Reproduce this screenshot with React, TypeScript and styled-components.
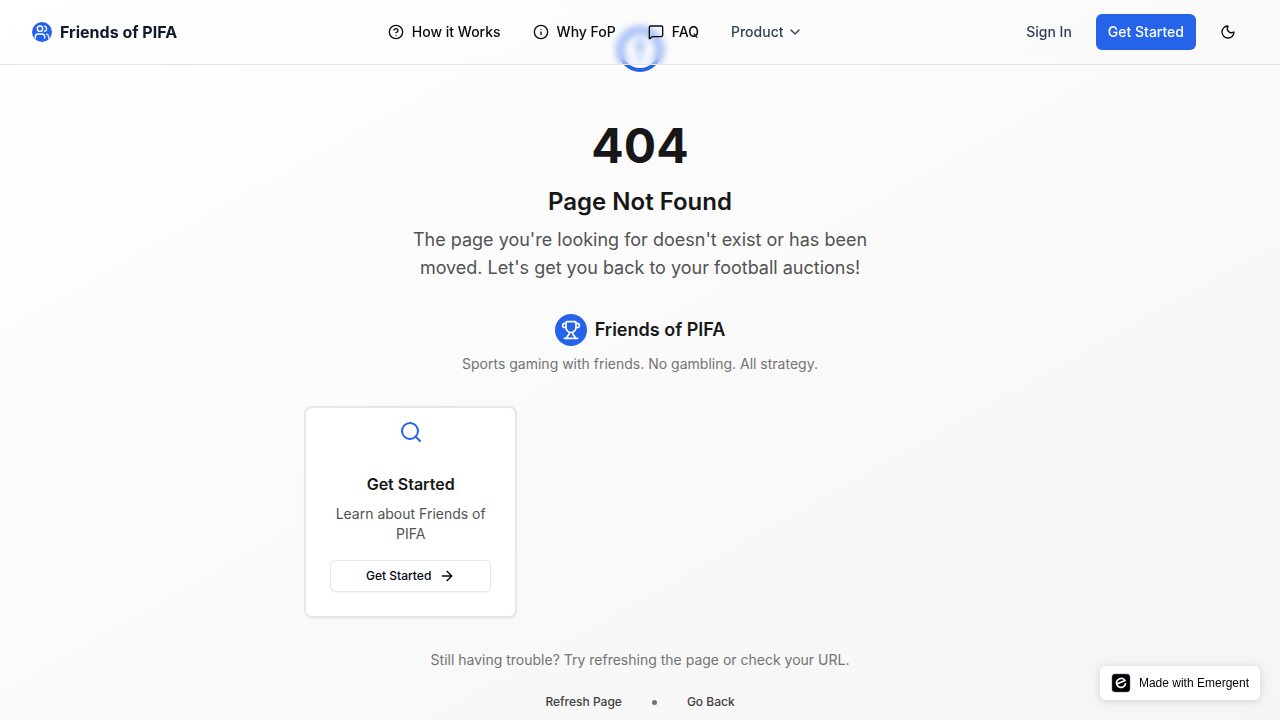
import React from "react";
import styled, { createGlobalStyle } from "styled-components";
import {
  ArrowRight,
  ChevronDown,
  CircleAlert,
  CircleQuestionMark,
  Info,
  MessageSquare,
  Moon,
  Search,
  Trophy,
  Users,
} from "lucide-react";

const GlobalStyle = createGlobalStyle`
  *, *::before, *::after { box-sizing: border-box; }
  body {
    margin: 0;
    font-family: Inter, "Liberation Sans", sans-serif;
    color: #171717;
  }
  h1, h2, h3, p { margin: 0; }
  button { font-family: inherit; cursor: pointer; }
  a { color: inherit; text-decoration: none; }
`;

const Page = styled.div`
  min-height: 100vh;
  background: linear-gradient(to bottom right, #ffffff 0%, #f5f5f5 100%);
`;

const Header = styled.header`
  position: fixed;
  inset: 0 0 auto 0;
  z-index: 10;
  height: 65px;
  padding: 0 32px;
  display: flex;
  align-items: center;
  justify-content: space-between;
  border-bottom: 1px solid #e5e5e5;
  background: rgba(255, 255, 255, 0.1);
  backdrop-filter: blur(4px);
`;

const Brand = styled.a`
  display: flex;
  align-items: center;
  gap: 8px;
  font-size: 16px;
  line-height: 24px;
  font-weight: 700;
  color: #0f172a;
`;

const Disc = styled.span<{ $size: number }>`
  width: ${(p) => p.$size}px;
  height: ${(p) => p.$size}px;
  border-radius: 50%;
  background: #2563eb;
  color: #ffffff;
  display: flex;
  align-items: center;
  justify-content: center;
`;

const Nav = styled.nav`
  display: flex;
  align-items: center;
  gap: 32px;
`;

const NavLink = styled.a`
  display: flex;
  align-items: center;
  gap: 8px;
  font-size: 14px;
  line-height: 20px;
  font-weight: 500;
  color: #0a0a0a;
`;

const NavMenuButton = styled.button`
  display: flex;
  align-items: center;
  gap: 4px;
  padding: 0;
  border: 0;
  background: none;
  font-size: 14px;
  line-height: 20px;
  font-weight: 500;
  color: #334155;
`;

const Actions = styled.div`
  display: flex;
  align-items: center;
  gap: 12px;
`;

const SignIn = styled.a`
  padding: 8px 12px;
  font-size: 14px;
  line-height: 20px;
  font-weight: 500;
  color: #334155;
`;

const PrimaryButton = styled.button`
  height: 36px;
  padding: 0 12px;
  border: 0;
  border-radius: 6px;
  background: #2563eb;
  color: #ffffff;
  font-size: 14px;
  line-height: 20px;
  font-weight: 500;
`;

const IconButton = styled.button`
  width: 40px;
  height: 36px;
  padding: 0;
  border: 0;
  background: none;
  color: #0a0a0a;
  display: flex;
  align-items: center;
  justify-content: center;
`;

const Main = styled.main`
  max-width: 704px;
  margin: 0 auto;
  padding: 26px 16px 0;
  display: flex;
  flex-direction: column;
  align-items: center;
  text-align: center;
`;

const AlertIcon = styled(CircleAlert)`
  width: 48px;
  height: 48px;
  color: #2563eb;
`;

const Title = styled.h1`
  margin-top: 48px;
  font-size: 48px;
  line-height: 48px;
  font-weight: 700;
`;

const Subtitle = styled.h2`
  margin-top: 16px;
  font-size: 24px;
  line-height: 32px;
  font-weight: 600;
`;

const Lead = styled.p`
  max-width: 480px;
  margin-top: 8px;
  font-size: 18px;
  line-height: 28px;
  color: #525252;
`;

const BrandRow = styled.div`
  display: flex;
  align-items: center;
  gap: 8px;
  margin-top: 32px;
  font-size: 18px;
  line-height: 28px;
  font-weight: 600;
`;

const Note = styled.p<{ $gap: number }>`
  margin-top: ${(p) => p.$gap}px;
  font-size: 14px;
  line-height: 20px;
  color: #737373;
`;

const CardGrid = styled.section`
  width: 100%;
  margin-top: 32px;
  display: grid;
  grid-template-columns: repeat(3, 1fr);
  gap: 16px;
`;

const Card = styled.article`
  padding: 12px 24px 24px;
  display: flex;
  flex-direction: column;
  align-items: center;
  border: 2px solid #e5e7eb;
  border-radius: 8px;
  background: #ffffff;
  box-shadow: 0 1px 2px rgba(0, 0, 0, 0.06);
`;

const CardIcon = styled.span`
  display: flex;
  color: #2563eb;
`;

const CardTitle = styled.h3`
  margin-top: 28px;
  font-size: 16px;
  line-height: 24px;
  font-weight: 600;
`;

const CardText = styled.p`
  margin-top: 8px;
  font-size: 14px;
  line-height: 20px;
  color: #525252;
`;

const OutlineButton = styled.button`
  width: 100%;
  height: 32px;
  margin-top: 16px;
  display: flex;
  align-items: center;
  justify-content: center;
  gap: 8px;
  border: 1px solid #e5e7eb;
  border-radius: 6px;
  background: #ffffff;
  box-shadow: 0 1px 2px rgba(0, 0, 0, 0.05);
  font-size: 12px;
  line-height: 16px;
  font-weight: 500;
  color: #020617;
`;

const FooterActions = styled.div`
  margin-top: 16px;
  display: flex;
  align-items: center;
  gap: 18px;
`;

const TextButton = styled.button`
  height: 32px;
  padding: 0 12px;
  border: 0;
  background: none;
  font-size: 12px;
  line-height: 16px;
  font-weight: 500;
  color: #404040;
`;

const Dot = styled.span`
  width: 5px;
  height: 5px;
  border-radius: 50%;
  background: #737373;
`;

const Badge = styled.a`
  position: fixed;
  right: 20px;
  bottom: 20px;
  z-index: 20;
  height: 34px;
  padding: 0 11px;
  display: flex;
  align-items: center;
  gap: 8px;
  border-radius: 6px;
  background: #ffffff;
  box-shadow: 0 1px 8px rgba(0, 0, 0, 0.16);
  font-family: "Liberation Sans", sans-serif;
  font-size: 12px;
  line-height: 16px;
  color: #000000;
`;

function EmergentLogo() {
  return (
    <svg width="20" height="20" viewBox="0 0 20 20" fill="none" aria-hidden="true">
      <rect x="1" y="1" width="18" height="18" rx="3" fill="#000" stroke="#5b6a9a" strokeWidth="0.5" />
      <path
        d="M5.800 11 14 7.600C12.900 5.400 10.300 4.800 8.100 6C5.800 7.300 5 9.900 6.200 12.200C7.500 14.600 10.300 15 12.400 13.700C13.800 12.800 14.500 11.600 14.700 10.200"
        stroke="#fff"
        strokeWidth="1.7"
      />
    </svg>
  );
}

export default function App() {
  return (
    <Page>
      <GlobalStyle />
      <Header>
        <Brand href="#">
          <Disc $size={20}>
            <Users size={16} />
          </Disc>
          Friends of PIFA
        </Brand>
        <Nav>
          <NavLink href="#how"><CircleQuestionMark size={16} />How it Works</NavLink>
          <NavLink href="#why"><Info size={16} />Why FoP</NavLink>
          <NavLink href="#faq"><MessageSquare size={16} />FAQ</NavLink>
          <NavMenuButton>Product<ChevronDown size={16} /></NavMenuButton>
        </Nav>
        <Actions>
          <SignIn href="#sign-in">Sign In</SignIn>
          <PrimaryButton>Get Started</PrimaryButton>
          <IconButton aria-label="Toggle theme"><Moon size={16} /></IconButton>
        </Actions>
      </Header>

      <Main>
        <AlertIcon />
        <Title>404</Title>
        <Subtitle>Page Not Found</Subtitle>
        <Lead>
          The page you're looking for doesn't exist or has been moved. Let's get
          you back to your football auctions!
        </Lead>
        <BrandRow>
          <Disc $size={32}>
            <Trophy size={20} />
          </Disc>
          Friends of PIFA
        </BrandRow>
        <Note $gap={8}>Sports gaming with friends. No gambling. All strategy.</Note>
        <CardGrid>
          <Card>
            <CardIcon><Search size={24} /></CardIcon>
            <CardTitle>Get Started</CardTitle>
            <CardText>Learn about Friends of PIFA</CardText>
            <OutlineButton>Get Started<ArrowRight size={16} /></OutlineButton>
          </Card>
        </CardGrid>
        <Note $gap={32}>Still having trouble? Try refreshing the page or check your URL.</Note>
        <FooterActions>
          <TextButton>Refresh Page</TextButton>
          <Dot />
          <TextButton>Go Back</TextButton>
        </FooterActions>
      </Main>

      <Badge href="#emergent"><EmergentLogo />Made with Emergent</Badge>
    </Page>
  );
}
